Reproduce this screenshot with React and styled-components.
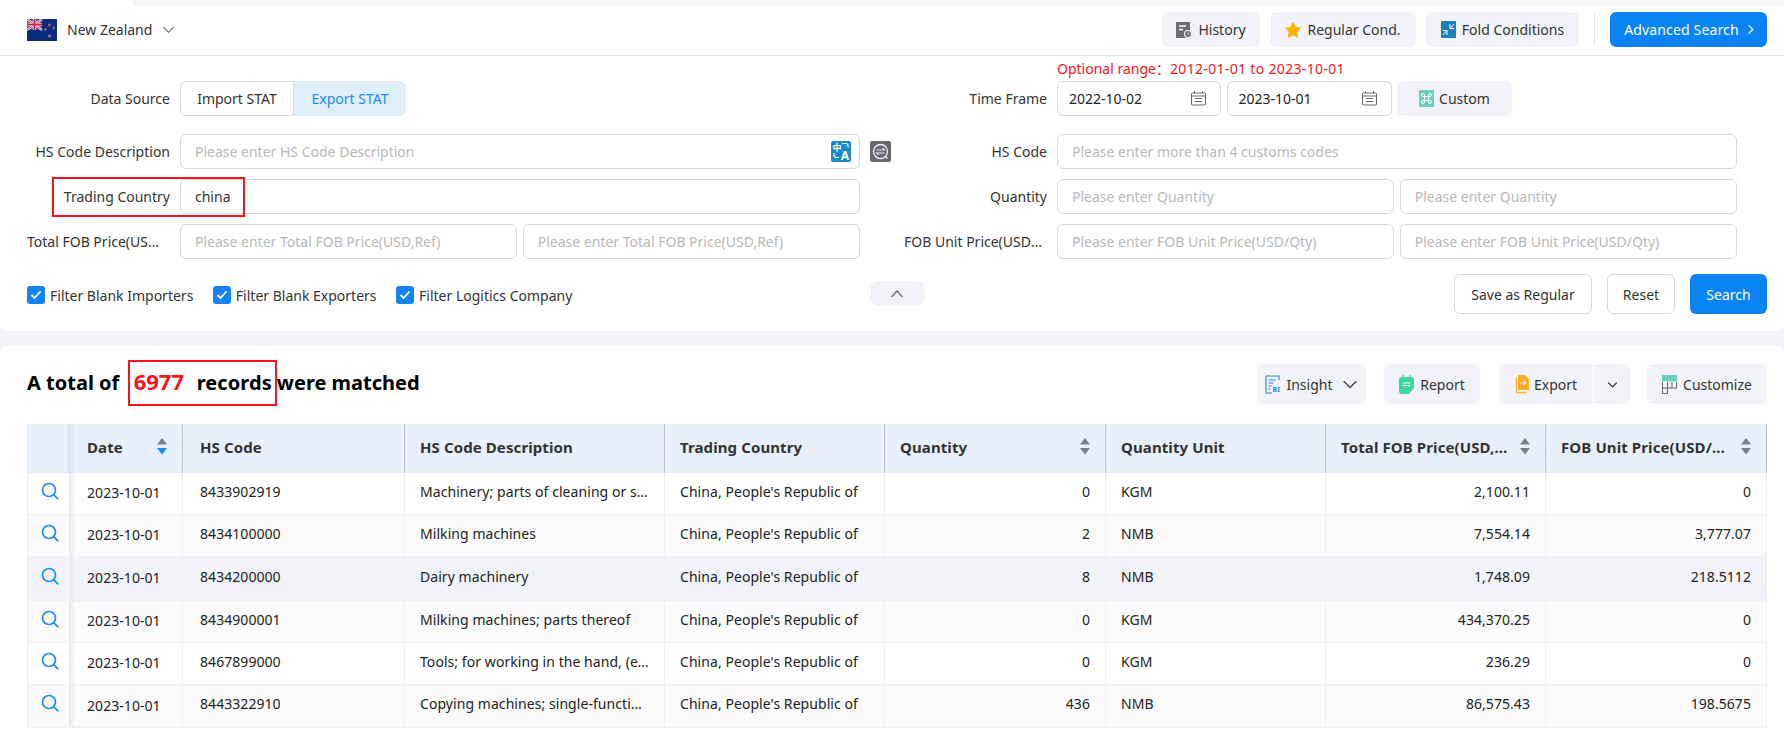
import React from "react";
import styled, { createGlobalStyle } from "styled-components";

const Global = createGlobalStyle`
  html, body { margin: 0; padding: 0; overflow: hidden; background: #f1f3f9; }
  body { font-family: "Noto Sans", "Noto Sans CJK SC", sans-serif; font-size: 14px; color: #222; }
  * { box-sizing: border-box; }
`;

const Page = styled.div`
  width: 1784px; height: 731px; overflow: hidden; display: flex; flex-direction: column; background: #f1f3f9;
`;
const TopStrip = styled.div`
  height: 6px; flex: none; background: #f8f8f9; display: flex;
`;
const TopStripLeft = styled.div`
  width: 135px; background: #fff; border-right: 1px solid #e6e6e6;
`;
const FilterPanel = styled.section`
  background: #fff; height: 275px; flex: none; border-radius: 0 0 6px 6px; padding: 0 17px 0 27px;
`;
const Header = styled.header`
  background: #fff; flex: none; height: 50px; padding: 6px 17px 8px 27px; display: flex; align-items: center;
  justify-content: space-between; border-bottom: 1px solid #e8e8e8;
`;
const Country = styled.div`
  display: flex; align-items: center; color: #333;
`;
const CountryName = styled.span`
  margin-left: 10px; margin-right: 10px;
`;
const HeaderActions = styled.div`
  display: flex; align-items: center; gap: 10px;
`;
const SoftButton = styled.button`
  height: ${p => p.$h || 35}px; width: ${p => p.$w}px; flex: none; border: 0; border-radius: 6px; background: #f1f3f9; color: #333;
  font: inherit; display: inline-flex; align-items: center; justify-content: center; gap: ${p => p.$gap ?? 6}px; padding: 0;
`;
const Divider = styled.span`
  width: 1px; height: 31px; background: #dfe1e6; margin: 0 5px;
`;
const PrimaryButton = styled.button`
  height: ${p => p.$h}px; width: ${p => p.$w}px; border: 0; border-radius: 6px; background: #0a84f5; color: #fff;
  font: inherit; letter-spacing: ${p => p.$ls || 0}px; display: inline-flex; align-items: center; justify-content: center; gap: 6px;
  padding: 0 0 0 ${p => p.$pl || 0}px;
`;
const RangeNote = styled.div`
  height: 25px; line-height: 25px; padding-left: 1030px; color: #f5141e; white-space: pre;
`;
const RangeDates = styled.span`
  letter-spacing: .33px;
`;
const Fields = styled.div`
  display: grid; grid-template-columns: 833px 833px; column-gap: 44px; row-gap: 10px;
`;
const Field = styled.div`
  position: relative; display: flex; align-items: center; gap: 10px; height: 35px; margin-bottom: ${p => p.$mb || 0}px;
`;
const Label = styled.label`
  width: 143px; flex: none; text-align: right; color: #333; white-space: nowrap; overflow: hidden; text-overflow: ellipsis;
  padding-right: ${p => p.$pr || 0}px;
`;
const Controls = styled.div`
  flex: 1; min-width: 0; display: flex; align-items: center; gap: 5.5px;
`;
const Segment = styled.div`
  display: flex; height: 35px;
`;
const SegmentItem = styled.button`
  width: ${p => p.$w}px; height: 35px; font: inherit; padding: 0;
  border: 1px solid ${p => (p.$on ? "#deeffa" : "#d9d9d9")};
  background: ${p => (p.$on ? "#deeffa" : "#fff")}; color: ${p => (p.$on ? "#1e88f5" : "#333")};
  border-radius: ${p => (p.$on ? "0 6px 6px 0" : "6px 0 0 6px")};
`;
const InputWrap = styled.div`
  position: relative; flex: 1; min-width: 0; height: 35px;
`;
const Input = styled.input`
  width: 100%; height: 35px; border: 1px solid #d9d9d9; border-radius: 6px; padding: 0 ${p => p.$pr || 14}px 0 14px;
  font: inherit; color: #333; background: #fff; outline: 0;
  &::placeholder { color: #b8b8b8; opacity: 1; }
`;
const DateBox = styled.div`
  width: ${p => p.$w}px; height: 35px; flex: none; border: 1px solid #d9d9d9; border-radius: 6px; display: flex; align-items: center;
  justify-content: space-between; padding: 0 14px 0 11px; color: #222;
`;
const InputIcon = styled.span`
  position: absolute; right: 9px; top: 7px; display: flex;
`;
const SideIcon = styled.span`
  flex: none; display: flex; margin-left: 0; margin-right: -31px;
`;
const Annotation = styled.span`
  position: absolute; left: 25px; top: -2px; width: 193px; height: 40px; border: 2px solid #f5141e; pointer-events: none;
`;
const ActionRow = styled.div`
  margin-top: 15px; width: 1740px; height: 40px; display: grid; grid-template-columns: 1fr auto 1fr; align-items: start;
`;
const Checks = styled.div`
  display: flex; align-items: center; gap: 19.5px; height: 32px; margin-top: 5px;
`;
const Check = styled.label`
  display: flex; align-items: center; gap: 5px; color: #333;
`;
const Box = styled.span`
  width: 18px; height: 18px; border-radius: 3px; background: #1283f0; display: flex; align-items: center; justify-content: center;
`;
const Collapse = styled.button`
  width: 55px; height: 25px; margin-top: 7px; border: 0; border-radius: 8px; background: #f1f3f9; display: flex; align-items: center;
  justify-content: center; padding: 0;
`;
const RightActions = styled.div`
  display: flex; justify-content: flex-end; gap: 15px;
`;
const OutlineButton = styled.button`
  width: ${p => p.$w}px; height: 40px; padding: 0; border: 1px solid #d9d9d9; border-radius: 6px; background: #fff; color: #333; font: inherit;
`;
const ResultPanel = styled.section`
  margin-top: 15px; flex: 1; background: #fff; border-radius: 6px 6px 0 0; padding: 18px 17px 0 27px;
`;
const ResultBar = styled.div`
  height: 40px; display: flex; align-items: center; justify-content: space-between;
`;
const Heading = styled.h2`
  margin: -3px 0 0; font-size: 20px; line-height: 46px; font-weight: 700; color: #000; white-space: pre;
`;
const HeadingBox = styled.span`
  display: inline-block; height: 46px; line-height: 42px; padding: 0 3px 0 4px; border: 2px solid #f5141e; margin-left: -2px; vertical-align: baseline;
  letter-spacing: .1px;
`;
const Count = styled.span`
  color: #f5141e; font-size: 22px; line-height: 20px; margin-right: 2px; letter-spacing: 0;
`;
const ResultActions = styled.div`
  display: flex; align-items: center;
`;
const Spaced = styled.span`
  display: inline-flex; margin-left: ${p => p.$ml || 0}px;
`;
const SplitButton = styled.div`
  display: flex; width: 131px; height: 40px; border-radius: 6px; overflow: hidden; background: #f1f3f9; margin-left: 19px;
`;
const SplitMain = styled.button`
  width: 95px; border: 0; border-right: 1px solid #fff; background: transparent; font: inherit; color: #333; display: flex;
  align-items: center; justify-content: center; gap: 5px; padding: 0;
`;
const SplitArrow = styled.button`
  flex: 1; border: 0; background: transparent; display: flex; align-items: center; justify-content: center; padding: 0;
`;
const Table = styled.table`
  margin-top: 20px; width: 1740px; border-collapse: separate; border-spacing: 0; table-layout: fixed;
`;
const Th = styled.th`
  position: relative; height: 49px; padding: 0 15px 4px ${p => p.$pl || 15}px; background: #e8effd; text-align: left; font-weight: 700; font-size: 15px; color: #333;
  letter-spacing: .1px;
  border-right: 1px solid ${p => (p.$plain ? "transparent" : "#b9bfd0")};
`;
const ThInner = styled.div`
  display: flex; align-items: center; justify-content: space-between; gap: 8px;
`;
const ThText = styled.span`
  min-width: 0; white-space: nowrap; overflow: hidden; text-overflow: ellipsis;
`;
const Tr = styled.tr`
  height: ${p => p.$h}px;
  background: ${p => p.$bg};
`;
const Td = styled.td`
  position: relative; padding: 0 15px ${p => (p.$low ? "2px" : "5px")} ${p => p.$pl || 15}px;
  text-align: ${p => (p.$num ? "right" : "left")}; color: #222; white-space: nowrap; overflow: hidden; text-overflow: ellipsis;
  letter-spacing: .06px;
  border-right: 1px solid #eef0f4; border-bottom: 1px solid #eef0f4;
`;
const FixedTd = styled.td`
  position: relative; padding: 0 0 2px 2px; text-align: center; border-left: 1px solid #eef0f4; border-bottom: 1px solid #eef0f4;
  &::after { content: ""; position: absolute; top: 0; bottom: 0; right: -7px; width: 7px; background: linear-gradient(90deg, #e6e8ef, rgba(255,255,255,0)); z-index: 1; }
`;
const FixedTh = styled(Th)`
  &::after { content: ""; position: absolute; top: 0; bottom: 0; right: -7px; width: 7px; background: linear-gradient(90deg, #d6dbea, rgba(232,239,253,0)); z-index: 1; }
`;

const CHEVRON = {
  down: "M1.5 4.5 7 10l5.5-5.5",
  up: "M1.5 10 7 4l5.5 6",
  right: "M4.5 1.5 10 7l-5.5 5.5",
};
const Chevron = ({ size = 14, color = "#666", sw = 1.2, dir = "down" }) => (
  <svg width={size} height={size} viewBox="0 0 14 14" fill="none">
    <path d={CHEVRON[dir]} stroke={color} strokeWidth={sw} />
  </svg>
);

const Flag = () => (
  <svg width="30" height="22" viewBox="0 0 30 22">
    <rect width="30" height="22" fill="#0a2a7e" />
    <g>
      <rect width="15" height="11" fill="#23357f" />
      <path d="M0 0 15 11M15 0 0 11" stroke="#eee" strokeWidth="2.4" />
      <path d="M0 0 15 11M15 0 0 11" stroke="#cf2a44" strokeWidth=".9" />
      <path d="M7.5 0v11M0 5.5h15" stroke="#eee" strokeWidth="3.6" />
      <path d="M7.5 0v11M0 5.5h15" stroke="#cf2a44" strokeWidth="2" />
    </g>
    <g fill="#d9263f" stroke="#eee" strokeWidth=".3">
      <circle cx="22.5" cy="6" r="1.1" />
      <circle cx="26.8" cy="9" r="1" />
      <circle cx="18.5" cy="10.5" r="1" />
      <circle cx="22.5" cy="17" r="1.2" />
    </g>
  </svg>
);

const HistoryIcon = () => (
  <svg width="16" height="16" viewBox="0 0 16 16">
    <path d="M1 0h12a1 1 0 0 1 1 1v14a1 1 0 0 1-1 1H1a1 1 0 0 1-1-1V1a1 1 0 0 1 1-1z" fill="#6b6d72" />
    <path d="M3 4h7M3 7.5h4" stroke="#fff" strokeWidth="1.4" />
    <circle cx="12" cy="12" r="4" fill="#fff" />
    <circle cx="12" cy="12" r="3" fill="#6b6d72" />
    <path d="M12 10.4V12h1.4" stroke="#fff" strokeWidth=".8" fill="none" />
  </svg>
);
const StarIcon = () => (
  <svg width="16" height="16" viewBox="0 0 16 16">
    <path d="M8 .5l2.3 4.9 5.2.7-3.8 3.7.9 5.4L8 12.7l-4.6 2.5.9-5.4L.5 6.1l5.2-.7z" fill="#ffb300" stroke="#ffb300" strokeLinejoin="round" />
  </svg>
);
const FoldIcon = () => (
  <svg width="15" height="17" viewBox="0 0 15 17">
    <rect width="15" height="17" rx="1" fill="#1d80b8" />
    <path d="M9 3v4.5h4M9 7.5l4-4.5M6 14v-4.5H2M6 9.5 2 14" stroke="#fff" strokeWidth="1" fill="none" />
  </svg>
);
const CalendarIcon = () => (
  <svg width="15" height="15" viewBox="0 0 15 15" fill="none" stroke="#666" strokeWidth="1">
    <rect x=".5" y="2" width="14" height="12" rx="1" />
    <path d="M.5 5h14M4 7.5h7M4 10.5h7M3.5 0v2M11.5 0v2" />
  </svg>
);
const CustomIcon = () => (
  <svg width="15" height="17" viewBox="0 0 15 17">
    <rect width="15" height="17" fill="#6bcfc0" />
    <path d="M5.5 6.5h4v4h-4zM5.5 6.5V5a1.5 1.5 0 1 0-1.5 1.5h1.5M9.5 6.5V5A1.5 1.5 0 1 1 11 6.5H9.5M5.5 10.5V12A1.5 1.5 0 1 1 4 10.5h1.5M9.5 10.5V12a1.5 1.5 0 1 0 1.5-1.5H9.5" fill="none" stroke="#fff" strokeWidth="1" />
  </svg>
);
const TranslateIcon = () => (
  <svg width="20" height="21" viewBox="0 0 20 21">
    <rect width="20" height="21" rx="2" fill="#1a8ac4" />
    <text x="1.5" y="10" fontSize="9" fontWeight="700" fill="#fff" fontFamily="Noto Sans CJK SC, sans-serif">中</text>
    <text x="10" y="19" fontSize="11.5" fontWeight="700" fill="#fff" fontFamily="Noto Sans, sans-serif">A</text>
    <path d="M11 2.5h4a2 2 0 0 1 2 2v2M3 12v2a2.5 2.5 0 0 0 2.5 2.5H8" stroke="#fff" strokeWidth="1.2" fill="none" />
  </svg>
);
const CompareIcon = () => (
  <svg width="21" height="21" viewBox="0 0 21 21">
    <rect width="21" height="21" rx="2" fill="#68696e" />
    <circle cx="10.500" cy="10.500" r="7" fill="none" stroke="#fff" strokeWidth="1.3" opacity=".9" />
    <path d="M15.500 15.500l2 2" stroke="#fff" strokeWidth="1.3" />
    <path d="M6.500 9h8l-2-2M14.500 12h-8l2 2" stroke="#fff" strokeWidth="1.1" fill="none" opacity=".9" />
  </svg>
);
const TickIcon = () => (
  <svg width="12" height="10" viewBox="0 0 12 10" fill="none">
    <path d="M1.5 5 4.5 8l6-6.5" stroke="#fff" strokeWidth="1.8" />
  </svg>
);
const InsightIcon = () => (
  <svg width="15" height="19" viewBox="0 0 15 19" fill="none" stroke="#2b86c4" strokeWidth="1.1">
    <path d="M14 5V1H1v17h6" />
    <path d="M3.5 5h7M3.5 8h5M3.5 11h3M3.5 14h2" />
    <text x="7.6" y="16.5" fontSize="7" fontWeight="700" fill="#2b86c4" stroke="none" fontFamily="Noto Sans, sans-serif">BI</text>
  </svg>
);
const ReportIcon = () => (
  <svg width="15" height="19" viewBox="0 0 15 19">
    <path d="M3 2h9a3 3 0 0 1 3 3v8l-5 6H3a3 3 0 0 1-3-3V5a3 3 0 0 1 3-3z" fill="#3ed99a" />
    <path d="M4 0v3.500M11 0v3.500" stroke="#3ed99a" strokeWidth="1.400" />
    <path d="M4 8h7M4 10.500h7" stroke="#fff" strokeWidth="1.200" />
  </svg>
);
const ExportIcon = () => (
  <svg width="14" height="19" viewBox="0 0 14 19">
    <path d="M1.500 2.500v15h10" fill="none" stroke="#ffb13b" strokeWidth="1.400" />
    <path d="M3 0h7l4 4v11H3z" fill="#ffa928" />
    <path d="M5.500 8h5M8.500 5.800l2.300 2.200-2.300 2.200" stroke="#fff" strokeWidth="1.100" fill="none" />
  </svg>
);
const CustomizeIcon = () => (
  <svg width="15" height="19" viewBox="0 0 15 19" fill="none">
    <rect width="15" height="6.500" fill="#6bcfc0" />
    <path d="M.5 7v11.500h5V7M.5 13h14.500M5.500 7v6M10 7v6M14.500 7v6" stroke="#666" strokeWidth="1" />
  </svg>
);
const SearchIcon = () => (
  <svg width="18" height="18" viewBox="0 0 18 18" fill="none" stroke="#1b8cf2" strokeWidth="1.700">
    <circle cx="8" cy="8" r="6.500" />
    <path d="M12.700 12.700 16.800 16.800" strokeLinecap="round" />
  </svg>
);
const Sort = ({ active }) => (
  <svg width="10" height="17" viewBox="0 0 10 17" style={{ flex: "none" }}>
    <path d="M5 0l5 6.500H0z" fill="#7d7f86" />
    <path d="M5 16.500l-5-6.500h10z" fill={active ? "#1b8cf2" : "#7d7f86"} />
  </svg>
);

const COLS = [42, 114, 222, 260, 220, 221, 220, 220, 221];
const HEAD = [
  { t: "Date", sort: true, active: true, pl: 18 },
  { t: "HS Code", pl: 17 },
  { t: "HS Code Description" },
  { t: "Trading Country" },
  { t: "Quantity", sort: true },
  { t: "Quantity Unit" },
  { t: "Total FOB Price(USD,Ref)", sort: true },
  { t: "FOB Unit Price(USD/Qty)", sort: true },
];
const C = "China, People's Republic of";
const ROWS = [
  { h: 42, bg: "#fff", c: ["2023-10-01", "8433902919", "Machinery; parts of cleaning or sorting", C, "0", "KGM", "2,100.11", "0"] },
  { h: 42, bg: "#fafafa", c: ["2023-10-01", "8434100000", "Milking machines", C, "2", "NMB", "7,554.14", "3,777.07"] },
  { h: 44, bg: "#f1f3f9", c: ["2023-10-01", "8434200000", "Dairy machinery", C, "8", "NMB", "1,748.09", "218.5112"] },
  { h: 42, bg: "#fafafa", c: ["2023-10-01", "8434900001", "Milking machines; parts thereof", C, "0", "KGM", "434,370.25", "0"] },
  { h: 42, bg: "#fff", c: ["2023-10-01", "8467899000", "Tools; for working in the hand, (excl.)", C, "0", "KGM", "236.29", "0"] },
  { h: 43, bg: "#fafafa", c: ["2023-10-01", "8443322910", "Copying machines; single-function units", C, "436", "NMB", "86,575.43", "198.5675"] },
];

export default function App() {
  return (
    <Page>
      <Global />
      <TopStrip><TopStripLeft /></TopStrip>
      <Header>
        <Country>
          <Flag />
          <CountryName>New Zealand</CountryName>
          <Chevron size={13} />
        </Country>
        <HeaderActions>
          <SoftButton $w={98}><HistoryIcon />History</SoftButton>
          <SoftButton $w={146}><StarIcon />Regular Cond.</SoftButton>
          <SoftButton $w={153}><FoldIcon />Fold Conditions</SoftButton>
          <Divider />
          <PrimaryButton $w={157} $h={35} $ls={0.15} $pl={3}>Advanced Search<Chevron size={11} color="#fff" sw={1.5} dir="right" /></PrimaryButton>
        </HeaderActions>
      </Header>
      <FilterPanel>
        <RangeNote>Optional range：<RangeDates>2012-01-01 to 2023-10-01</RangeDates></RangeNote>
        <Fields>
          <Field $mb={8}>
            <Label>Data Source</Label>
            <Segment>
              <SegmentItem $w={114}>Import STAT</SegmentItem>
              <SegmentItem $w={112} $on>Export STAT</SegmentItem>
            </Segment>
          </Field>
          <Field $mb={8}>
            <Label>Time Frame</Label>
            <Controls>
              <DateBox $w={164}>2022-10-02<CalendarIcon /></DateBox>
              <DateBox $w={165}>2023-10-01<CalendarIcon /></DateBox>
              <SoftButton $w={115} $gap={5}><CustomIcon />Custom</SoftButton>
            </Controls>
          </Field>
          <Field>
            <Label>HS Code Description</Label>
            <InputWrap>
              <Input $pr={36} placeholder="Please enter HS Code Description" />
              <InputIcon><TranslateIcon /></InputIcon>
            </InputWrap>
            <SideIcon><CompareIcon /></SideIcon>
          </Field>
          <Field>
            <Label>HS Code</Label>
            <InputWrap><Input placeholder="Please enter more than 4 customs codes" /></InputWrap>
          </Field>
          <Field>
            <Label>Trading Country</Label>
            <InputWrap><Input defaultValue="china" /></InputWrap>
            <Annotation />
          </Field>
          <Field>
            <Label>Quantity</Label>
            <Controls>
              <InputWrap><Input placeholder="Please enter Quantity" /></InputWrap>
              <InputWrap><Input placeholder="Please enter Quantity" /></InputWrap>
            </Controls>
          </Field>
          <Field>
            <Label $pr={3}>Total FOB Price(USD,Ref)</Label>
            <Controls>
              <InputWrap><Input placeholder="Please enter Total FOB Price(USD,Ref)" /></InputWrap>
              <InputWrap><Input placeholder="Please enter Total FOB Price(USD,Ref)" /></InputWrap>
            </Controls>
          </Field>
          <Field>
            <Label>FOB Unit Price(USD/Qty)</Label>
            <Controls>
              <InputWrap><Input placeholder="Please enter FOB Unit Price(USD/Qty)" /></InputWrap>
              <InputWrap><Input placeholder="Please enter FOB Unit Price(USD/Qty)" /></InputWrap>
            </Controls>
          </Field>
        </Fields>
        <ActionRow>
          <Checks>
            <Check><Box><TickIcon /></Box>Filter Blank Importers</Check>
            <Check><Box><TickIcon /></Box>Filter Blank Exporters</Check>
            <Check><Box><TickIcon /></Box>Filter Logitics Company</Check>
          </Checks>
          <Collapse><Chevron size={14} dir="up" /></Collapse>
          <RightActions>
            <OutlineButton $w={138}>Save as Regular</OutlineButton>
            <OutlineButton $w={68}>Reset</OutlineButton>
            <PrimaryButton $w={77} $h={40}>Search</PrimaryButton>
          </RightActions>
        </ActionRow>
      </FilterPanel>
      <ResultPanel>
        <ResultBar>
          <Heading>A total of  <HeadingBox><Count>6977</Count>  records</HeadingBox>were matched</Heading>
          <ResultActions>
            <SoftButton $w={109} $h={40}><InsightIcon />Insight<Spaced $ml={3}><Chevron size={16} color="#444" /></Spaced></SoftButton>
            <Spaced $ml={18}><SoftButton $w={96} $h={40}><ReportIcon />Report</SoftButton></Spaced>
            <SplitButton>
              <SplitMain><ExportIcon />Export</SplitMain>
              <SplitArrow><Chevron size={11} color="#333" sw={1.5} /></SplitArrow>
            </SplitButton>
            <Spaced $ml={17}><SoftButton $w={120} $h={40}><CustomizeIcon />Customize</SoftButton></Spaced>
          </ResultActions>
        </ResultBar>
        <Table>
          <colgroup>
            {COLS.map((w, i) => <col key={i} width={w} />)}
          </colgroup>
          <thead>
            <tr>
              <FixedTh $plain $pl={1} />
              {HEAD.map(h => (
                <Th key={h.t} $pl={h.pl}>
                  <ThInner>
                    <ThText>{h.t}</ThText>
                    {h.sort && <Sort active={h.active} />}
                  </ThInner>
                </Th>
              ))}
            </tr>
          </thead>
          <tbody>
            {ROWS.map(r => (
              <Tr key={r.c[1]} $h={r.h} $bg={r.bg}>
                <FixedTd><SearchIcon /></FixedTd>
                {r.c.map((v, i) => (
                  <Td key={i} $low={i === 0} $pl={i === 0 ? 18 : i === 1 ? 17 : 15} $num={i === 4 || i === 6 || i === 7}>{v}</Td>
                ))}
              </Tr>
            ))}
          </tbody>
        </Table>
      </ResultPanel>
    </Page>
  );
}
